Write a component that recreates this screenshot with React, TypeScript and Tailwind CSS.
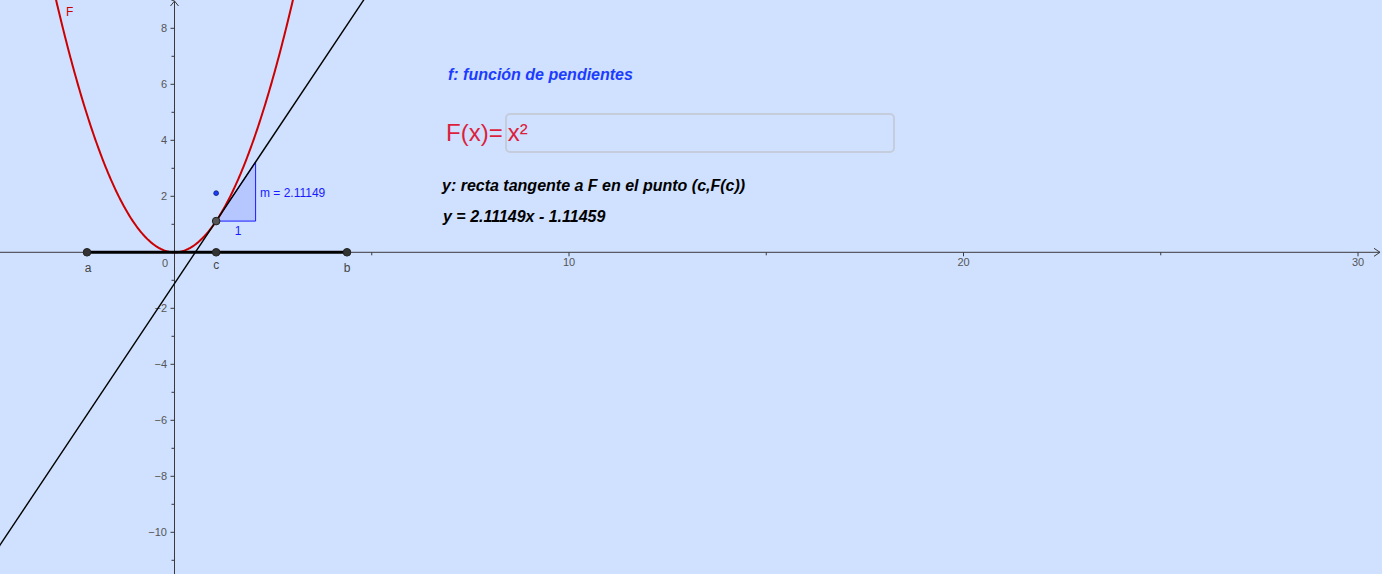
const W = 1382;
const H = 574;
const OX = 174.5;
const OY = 252.3;
const SX = 39.45;
const SY = 28;

const px = (x: number) => OX + x * SX;
const py = (y: number) => OY - y * SY;

const M = 2.11149;
const C = M / 2;
const FC = C * C;

function parabola() {
  const pts: string[] = [];
  for (let x = -3.2; x <= 3.2; x += 0.02) {
    pts.push(`${px(x).toFixed(2)},${py(x * x).toFixed(2)}`);
  }
  return "M" + pts.join(" L");
}

const xTicks = [5, 10, 15, 20, 25, 30];
const yTicks = [-11, -10, -9, -8, -7, -6, -5, -4, -3, -2, -1, 1, 2, 3, 4, 5, 6, 7, 8, 9];

function Plot() {
  const tx0 = -5.5;
  const tx1 = 5.2;
  return (
    <svg width={W} height={H} className="absolute inset-0" style={{ fontFamily: '"Liberation Sans", Arial, sans-serif' }}>
      {/* axes */}
      <line x1={0} y1={OY} x2={1380} y2={OY} stroke="#3a3a3a" strokeWidth={1} />
      <path d={`M1374 ${OY - 4} L1380 ${OY} L1374 ${OY + 4}`} fill="none" stroke="#3a3a3a" strokeWidth={1} />
      <line x1={OX} y1={1} x2={OX} y2={H} stroke="#3a3a3a" strokeWidth={1} />
      <path d={`M${OX - 4} 6 L${OX} 1 L${OX + 4} 6`} fill="none" stroke="#3a3a3a" strokeWidth={1} />

      {xTicks.map((t) => (
        <line key={t} x1={px(t)} y1={OY} x2={px(t)} y2={OY + (t % 10 === 0 ? 4 : 3)} stroke="#3a3a3a" />
      ))}
      {[10, 20, 30].map((t) => (
        <text key={t} x={px(t)} y={OY + 14} fontSize={11} fill="#555" textAnchor="middle">
          {t}
        </text>
      ))}
      {yTicks.map((t) => (
        <line key={t} x1={OX - (t % 2 === 0 ? 4 : 3)} y1={py(t)} x2={OX} y2={py(t)} stroke="#3a3a3a" />
      ))}
      {[-10, -8, -6, -4, -2, 2, 4, 6, 8].map((t) => (
        <text key={t} x={167} y={py(t) + 4} fontSize={11} fill="#555" textAnchor="end">
          {t < 0 ? `\u2212${-t}` : t}
        </text>
      ))}
      <text x={165} y={OY + 15} fontSize={11} fill="#555" textAnchor="middle">0</text>

      {/* slope triangle */}
      <polygon
        points={`${px(C)},${py(FC)} ${px(C + 1)},${py(FC)} ${px(C + 1)},${py(FC + M)}`}
        fill="#b6c6ff"
        stroke="#1a1aff"
        strokeWidth={1}
      />
      <text x={260} y={197} fontSize={12} fill="#1a1aff">m = 2.11149</text>
      <text x={238} y={235} fontSize={12} fill="#1a1aff" textAnchor="middle">1</text>

      {/* curve and tangent */}
      <path d={parabola()} fill="none" stroke="#cc0000" strokeWidth={2} />
      <line x1={px(tx0)} y1={py(M * tx0 - FC)} x2={px(tx1)} y2={py(M * tx1 - FC)} stroke="#000" strokeWidth={1.4} />
      <text x={66} y={16} fontSize={12} fill="#cc0000">F</text>

      {/* segment a-b */}
      <line x1={87} y1={OY} x2={347} y2={OY} stroke="#000" strokeWidth={3} />
      {[87, px(C), 347].map((x) => (
        <circle key={x} cx={x} cy={OY} r={3.8} fill="#333" stroke="#222" strokeWidth={1} />
      ))}
      <circle cx={px(C)} cy={py(FC)} r={3.8} fill="#555" stroke="#222" strokeWidth={1} />
      <circle cx={px(C)} cy={py(M)} r={2.4} fill="#1a3cff" stroke="#10206a" strokeWidth={0.8} />

      <text x={88} y={272} fontSize={12} fill="#444" textAnchor="middle">a</text>
      <text x={px(C)} y={269} fontSize={12} fill="#444" textAnchor="middle">c</text>
      <text x={347} y={272} fontSize={12} fill="#444" textAnchor="middle">b</text>
    </svg>
  );
}

export default function App() {
  return (
    <div className="relative h-[574px] w-[1382px] overflow-hidden bg-[#cfe1ff] font-['Liberation_Sans',Arial,sans-serif]">
      <Plot />

      <p className="absolute left-[448px] top-[63px] text-[16px] font-bold italic text-[#1c3cff]">
        f: función de pendientes
      </p>

      <div className="absolute left-[446px] top-[113px] flex items-center">
        <span className="text-[24px] leading-[40px] text-[#dc1f3c]">F(x)=</span>
        <div className="ml-[2px] flex h-[40px] w-[390px] items-center rounded-[5px] border-2 border-[#c5ccdb] px-[1px]">
          <span className="text-[24px] leading-none text-[#dc1f3c]">x²</span>
        </div>
      </div>

      <p className="absolute left-[442px] top-[174px] text-[16px] font-bold italic text-black">
        y: recta tangente a F en el punto (c,F(c))
      </p>
      <p className="absolute left-[443px] top-[205px] text-[16px] font-bold italic text-black">
        y = 2.11149x - 1.11459
      </p>
    </div>
  );
}
